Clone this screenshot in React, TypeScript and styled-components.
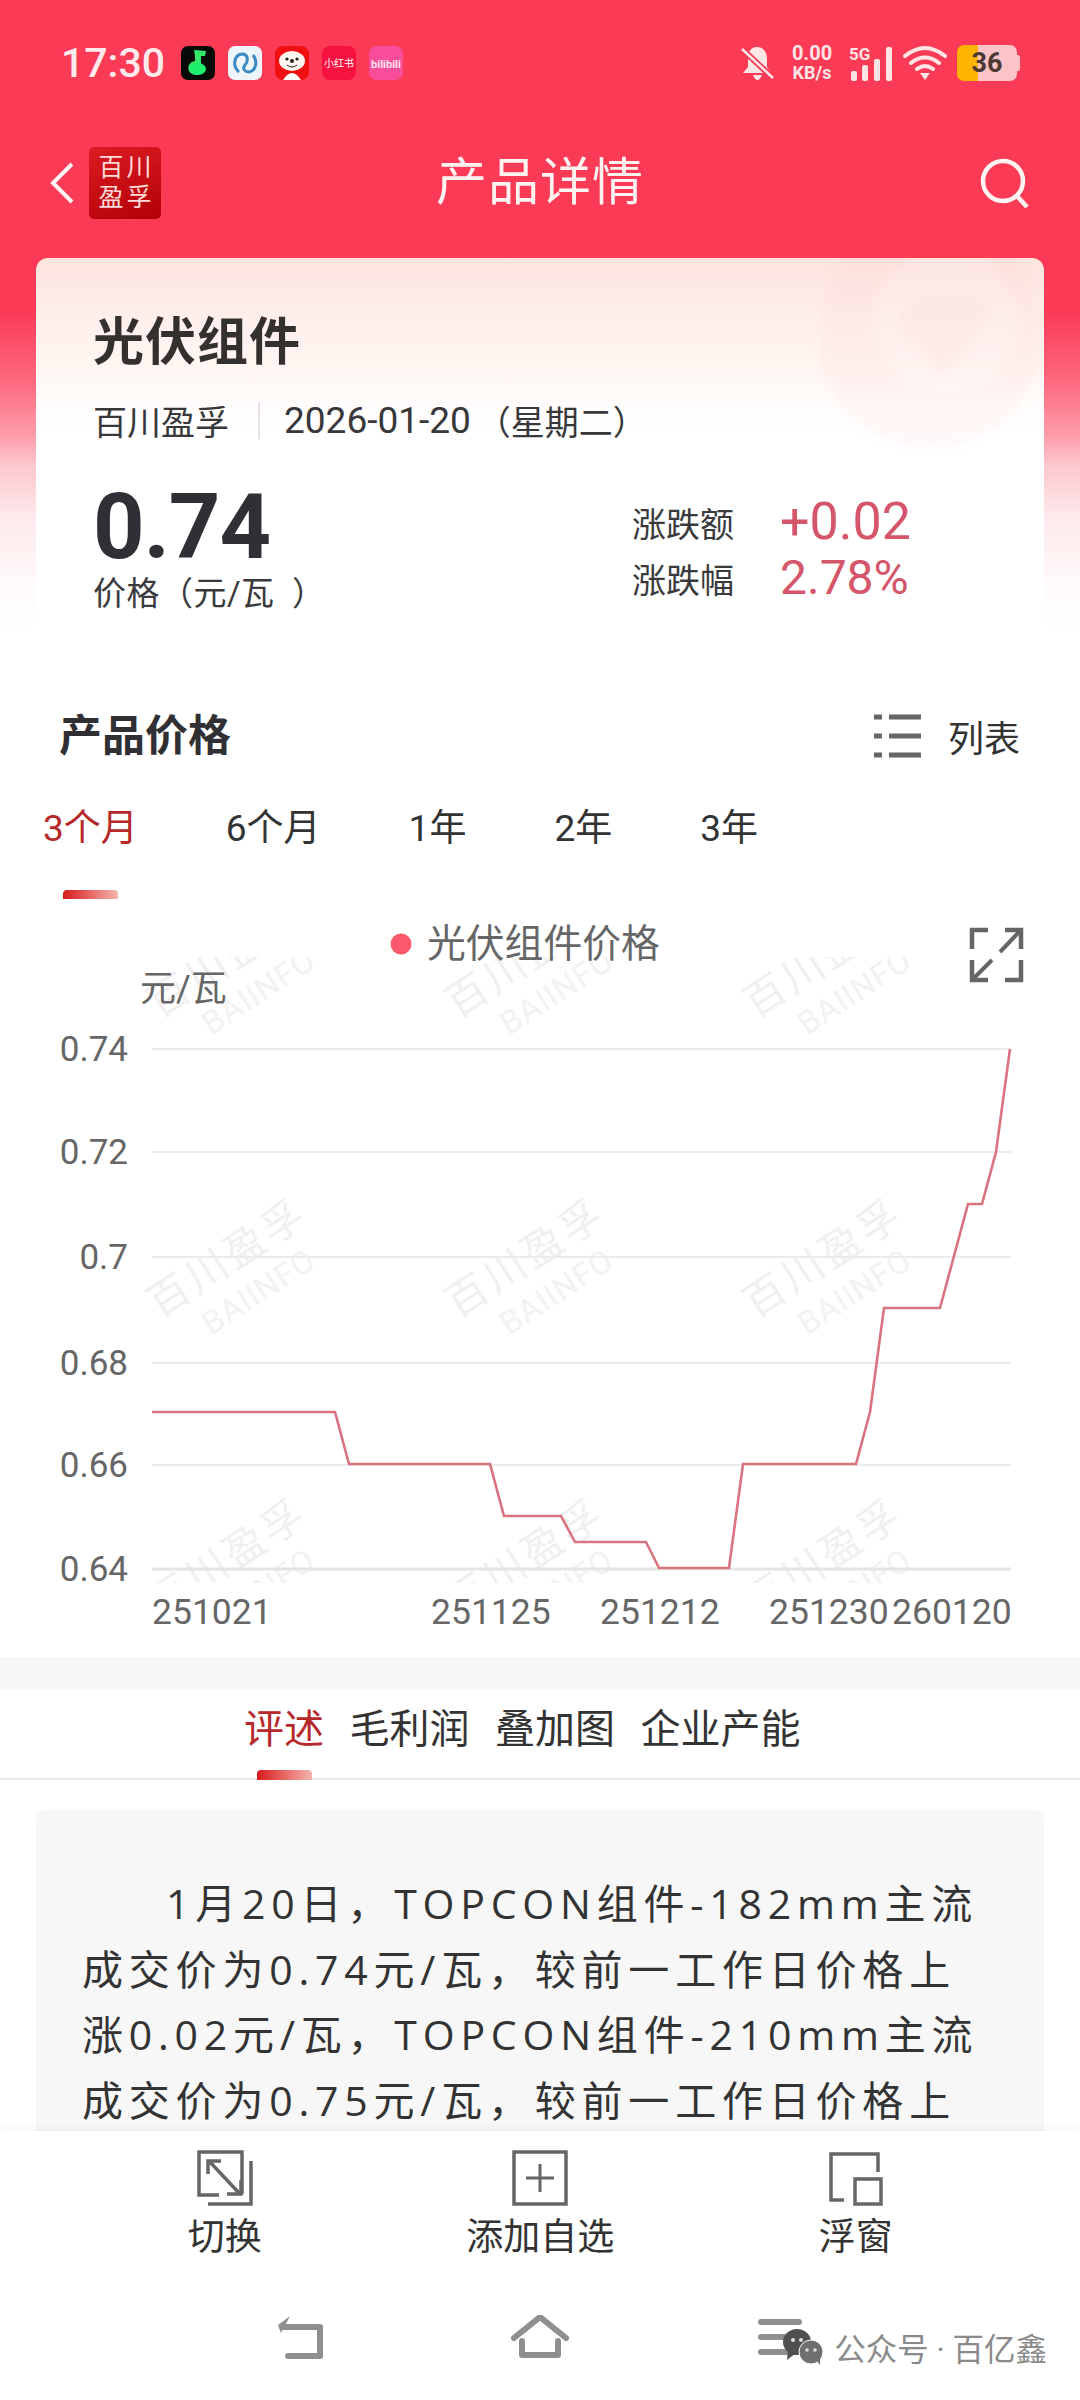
import React from "react";
import styled, { createGlobalStyle } from "styled-components";

const Global = createGlobalStyle`
  html, body { margin: 0; padding: 0; background: #fff; }
  * { box-sizing: border-box; }
  body { font-family: Roboto, "Noto Sans CJK SC", sans-serif; }
`;
const CJK = `Roboto, "Noto Sans CJK SC", sans-serif`;

const Page = styled.div`
  position: relative; width: 1080px; height: 2400px; overflow: hidden;
  display: flex; flex-direction: column; color: #2f2f33; font-family: ${CJK};
  background: linear-gradient(180deg, #fb3a56 0, #fb3a56 310px, #fd6a80 383px, #fe9aa8 433px, #fdc8cf 467px, #fee9ec 517px, #fffafa 583px, #fff 630px);
`;
const Scroll = styled.div`flex: 1; min-height: 0; overflow: hidden; display: flex; flex-direction: column;`;
const StatusBar = styled.div`
  height: 125px; flex: none; padding: 0 60px 0 61px; display: flex; align-items: center; justify-content: space-between;
`;
const StatusLeft = styled.div`display: flex; align-items: center;`;
const Time = styled.span`font-size: 41px; font-weight: 500; color: #ffe9ea; width: 120px; white-space: nowrap;`;
const AppIcons = styled.div`display: flex; gap: 13px;`;
const AppIcon = styled.svg`width: 34px; height: 34px; display: block;`;
const StatusRight = styled.div`display: flex; align-items: center;`;
const Speed = styled.div`
  width: 46px; margin: 0 14px 0 15px; color: #ffe4e5; font-weight: 700; text-align: center;
  display: flex; flex-direction: column; font-size: 20px; line-height: 20px;
`;
const SpeedUnit = styled.span`font-size: 18px; white-space: nowrap;`;
const Battery = styled.div`
  width: 60px; height: 36px; border-radius: 7px; overflow: hidden; display: flex; align-items: center; justify-content: center;
  margin-left: 10px; font-size: 27px; font-weight: 700; color: #4a3a33;
  background: linear-gradient(90deg, #ffb400 0, #ffb400 21px, #fdc4c8 21px);
`;
const BatteryCap = styled.div`width: 3px; height: 16px; background: #fdc4c8; border-radius: 0 2px 2px 0;`;
const NavBar = styled.div`
  height: 116px; flex: none; padding: 0 50px; display: grid; grid-template-columns: 1fr auto 1fr; align-items: center;
`;
const NavLeft = styled.div`display: flex; align-items: center; gap: 15px;`;
const NavRight = styled.div`display: flex; justify-content: flex-end;`;
const Logo = styled.div`
  width: 72px; height: 72px; border-radius: 5px; background: linear-gradient(160deg, #dc1c22, #b30008);
  display: flex; align-items: center; justify-content: center; text-align: center;
  color: #ffdcd8; font-size: 25px; line-height: 30px; letter-spacing: 3px; padding-left: 3px;
`;
const NavTitle = styled.h1`margin: 0; font-size: 51px; line-height: 60px; font-weight: 400; color: #fff3f2; letter-spacing: 1px;`;

const Card = styled.section`
  position: relative; flex: none; margin: 17px 36px 0; height: 392px; padding: 60px 57px 0; overflow: hidden;
  border-radius: 12px 12px 0 0;
  background: linear-gradient(180deg, #fde3de 0, #feefeb 60px, #fff6f2 110px, #fffdfc 150px, #fff 180px);
`;
const CardDeco = styled.svg`position: absolute; right: 0; top: 0; width: 224px; height: 200px; filter: blur(4px);`;
const CardTitle = styled.h2`position: relative; margin: 0; font-size: 51px; line-height: 50px; font-weight: 700; color: #33302f; letter-spacing: 1px;`;
const SubRow = styled.div`position: relative; margin-top: 32px; display: flex; align-items: center; height: 40px; font-size: 34px; color: #38383b; white-space: nowrap;`;
const SubDivider = styled.i`width: 2px; height: 37px; background: #e8e4e3; margin: 0 24px 0 29px;`;
const SubDate = styled.span`font-size: 37px;`;
const SubWeek = styled.span`margin-left: 6px;`;
const PriceRow = styled.div`display: grid; grid-template-columns: 539px auto; margin-top: 42px;`;
const PriceValue = styled.div`font-size: 90px; line-height: 92px; font-weight: 700; color: #2f2f35; letter-spacing: -1px;`;
const PriceLabel = styled.div`font-size: 33px; line-height: 40px; color: #3a3a3d; letter-spacing: .5px; white-space: pre;`;
const Stats = styled.div`margin-top: -4px; padding-top: 16px; display: grid; grid-template-columns: 148px auto; grid-auto-rows: 56px; align-items: center;`;
const StatLabel = styled.span`font-size: 34px; color: #3a3a3d;`;
const StatValue = styled.span<{ $size: number }>`font-size: ${p => p.$size}px; color: #d5566a; line-height: 56px; white-space: nowrap;`;

const SectionHead = styled.div`
  flex: none; background: #fff; padding: 64px 60px 0 59px; height: 108px; display: flex; align-items: center; justify-content: space-between;
`;
const SectionTitle = styled.h3`margin: 0; font-size: 43px; font-weight: 700; color: #302f33; line-height: 44px;`;
const ListBtn = styled.div`display: flex; align-items: center; gap: 27px; font-size: 36px; color: #333;`;
const RangeTabs = styled.div`flex: none; background: #fff; padding: 51px 0 0 43px; display: flex; gap: 88px;`;
const Tab = styled.div`display: flex; flex-direction: column; align-items: center; flex: none;`;
const TabText = styled.span<{ $active?: boolean }>`font-size: 37px; line-height: 40px; color: ${p => (p.$active ? "#b7282a" : "#333")}; white-space: nowrap;`;
const Indicator = styled.i<{ $top: number }>`
  display: block; width: 55px; height: 10px; margin-top: ${p => p.$top}px; border-radius: 4px 4px 0 0;
  background: linear-gradient(90deg, #d81a1c, #f5b5ae);
`;
const ChartSvg = styled.svg`flex: none; display: block; background: #fff; width: 1080px; height: 758px; margin-top: -1px;`;
const Band = styled.div`flex: none; height: 33px; background: #f7f7f7;`;
const DetailTabs = styled.div`
  flex: none; height: 90px; background: #fff; border-bottom: 2px solid #eeeae8; padding: 20px 0 0 244px; display: flex; gap: 25.5px; align-items: flex-start;
`;
const DetailTabText = styled(TabText)`font-size: 40px;`;
const TextWrap = styled.div`flex: 1; background: #fff; padding: 30px 36px 0; min-height: 0; overflow: hidden;`;
const TextCard = styled.div`
  height: 100%; border-radius: 10px 10px 0 0; background: #f7f7f8; padding: 61px 0 0 46px;
`;
const Para = styled.p`
  margin: 0; font-family: "Open Sans", "Noto Sans CJK SC", sans-serif; font-size: 41px; line-height: 65.5px; letter-spacing: 5.8px;
  color: #333; white-space: nowrap; text-indent: 84px;
`;
const ParaLine = styled.span`display: block; text-indent: 0;`;

const BottomBar = styled.div`flex: none; height: 269px; background: #fff; box-shadow: 0 -2px 8px rgba(0,0,0,.05); position: relative;`;
const Actions = styled.div`display: grid; grid-template-columns: repeat(3, 315.5px); padding: 19px 0 0 67px;`;
const Action = styled.div`display: flex; flex-direction: column; align-items: center; gap: 12px;`;
const ActionIcon = styled.svg`width: 56px; height: 56px; display: block;`;
const ActionLabel = styled.span`font-size: 37px; line-height: 40px; color: #333;`;
const SysNav = styled.div`display: grid; grid-template-columns: repeat(3, 240px); padding: 57px 180px 0; justify-items: center;`;
const SysIcon = styled.svg`width: 60px; height: 44px; display: block;`;
const Mark = styled.div`
  position: absolute; right: 33px; bottom: 30px; display: flex; align-items: center; gap: 10px; font-size: 31.5px; color: #8a8a8a; white-space: nowrap;
`;
const Wechat = styled.svg`width: 42px; height: 36px; display: block;`;

const gridYs: [string, number][] = [["0.74", 1049], ["0.72", 1152], ["0.7", 1257], ["0.68", 1363], ["0.66", 1465], ["0.64", 1569]];
const line = "152,1412 335,1412 349,1464 490,1464 504,1516 561,1516 575,1542 646,1542 659,1568 729,1568 743,1464 856,1464 870,1412 884,1308 940,1308 968,1204 982,1204 996,1152 1010,1049";
const dates: [string, number][] = [["251021", 152], ["251125", 431], ["251212", 600], ["251230", 769], ["260120", 892]];
const wmX = [0, 298, 596];
const wmY = [900, 1200, 1500];

function Chart() {
  return (
    <ChartSvg viewBox="0 899 1080 758">
      <defs><clipPath id="wm"><rect x="130" y="957" width="900" height="626" /></clipPath></defs>
      <g clipPath="url(#wm)" fontFamily={CJK}>
        {wmY.map(y => wmX.map(x => (
          <g key={`${x}-${y}`} transform={`translate(${x + 235} ${y + 70}) rotate(-33)`}>
            <text x="0" y="0" fontSize="41" textAnchor="middle" letterSpacing="4" fill="#f1efef">百川盈孚</text>
            <text x="8" y="42" fontSize="32" textAnchor="middle" letterSpacing="1" fill="#f3f1f1">BAIINFO</text>
          </g>
        )))}
      </g>
      <circle cx="401" cy="944" r="10.5" fill="#f9596a" />
      <text x="427" y="957" fontSize="38.8" fill="#666" fontFamily={CJK}>光伏组件价格</text>
      <text x="140" y="1001" fontSize="36" fill="#666" fontFamily={CJK}>元/瓦</text>
      <path d="M972 949 V930 H988 M1005 930 H1021 V949 M972 960 V980 H988 M1005 980 H1021 V960" fill="none" stroke="#666" strokeWidth="4.5" />
      <path d="M1000 952 L1019 932 M972 980 L992 960" stroke="#666" strokeWidth="4" fill="none" />
      {gridYs.map(([l, y]) => (
        <g key={l}>
          <line x1="152" x2="1011" y1={y} y2={y} stroke={l === "0.64" ? "#e4e4e4" : "#ebebeb"} strokeWidth={l === "0.64" ? 3 : 2} />
          <text x="128" y={y + 12} fontSize="35" textAnchor="end" fill="#666" fontFamily={CJK}>{l}</text>
        </g>
      ))}
      <polyline points={line} fill="none" stroke="#d9737f" strokeWidth="2.6" />
      {dates.map(([d, x]) => (
        <text key={d} x={x} y="1624" fontSize="35.5" fill="#666" fontFamily={CJK}>{d}</text>
      ))}
    </ChartSvg>
  );
}

export default function App() {
  return (
    <Page>
      <Global />
      <Scroll>
        <StatusBar>
          <StatusLeft>
            <Time>17:30</Time>
            <AppIcons>
              <AppIcon viewBox="0 0 34 34">
                <rect width="34" height="34" rx="7" fill="#070b08" />
                <path d="M13 4 L25 5 L24 10 L20 10 L20 17 A7.5 7 0 1 1 14 15 L14 10 Z" fill="#35e86a" />
                <ellipse cx="17" cy="23" rx="8" ry="6" fill="#1df06c" />
              </AppIcon>
              <AppIcon viewBox="0 0 34 34">
                <rect width="34" height="34" rx="7" fill="#eef5fa" />
                <path d="M11 26 C4 20 6 9 14 8 C21 8 20 16 17 19 C14 23 17 26 21 26 C28 25 30 15 25 9" fill="none" stroke="#3c8ac4" strokeWidth="3" />
              </AppIcon>
              <AppIcon viewBox="0 0 34 34">
                <rect width="34" height="34" rx="8" fill="#f01010" />
                <ellipse cx="17" cy="15" rx="13" ry="10" fill="#fff6ef" />
                <path d="M8 34 Q17 20 26 34 Z" fill="#fff" />
                <circle cx="12" cy="13" r="1.6" fill="#222" /><circle cx="22" cy="13" r="1.6" fill="#222" /><circle cx="17" cy="15" r="2" fill="#222" />
                <path d="M12 19 Q17 23 22 19" stroke="#222" strokeWidth="1" fill="none" />
              </AppIcon>
              <AppIcon viewBox="0 0 34 34">
                <rect width="34" height="34" rx="8" fill="#f7123f" />
                <text x="17" y="21" fontSize="10" fill="#fff" textAnchor="middle" fontFamily={CJK}>小红书</text>
              </AppIcon>
              <AppIcon viewBox="0 0 34 34">
                <rect width="34" height="34" rx="8" fill="#f84d9a" />
                <text x="17" y="22" fontSize="11" fill="#ffe3ef" textAnchor="middle" fontWeight="700" fontFamily={CJK}>bilibili</text>
              </AppIcon>
            </AppIcons>
          </StatusLeft>
          <StatusRight>
            <svg width="33" height="36" viewBox="0 0 33 36">
              <path d="M16 2 C9 2 7 8 7 14 V22 L2 28 H30 L26 22 V14 C26 8 23 2 16 2 Z M12 30 H21 Q19 35 16.5 35 Q14 35 12 30 Z" fill="#ffe6e6" />
              <path d="M1 4 L32 33" stroke="#fb3a56" strokeWidth="6" />
              <path d="M1 4 L32 33" stroke="#ffe6e6" strokeWidth="2.5" />
            </svg>
            <Speed>0.00<SpeedUnit>KB/s</SpeedUnit></Speed>
            <svg width="44" height="36" viewBox="0 0 44 36">
              <text x="0" y="15" fontSize="17" fontWeight="700" fill="#ffe4e5" fontFamily={CJK}>5G</text>
              <rect x="2" y="26" width="6" height="10" rx="2" fill="#ffe4e5" />
              <rect x="13" y="20" width="6" height="16" rx="2" fill="#ffe4e5" />
              <rect x="25" y="14" width="6" height="22" rx="2" fill="#ffe4e5" />
              <rect x="37" y="2" width="6" height="34" rx="2" fill="#ffe4e5" />
            </svg>
            <svg width="44" height="36" viewBox="0 0 44 36" style={{ marginLeft: 10 }}>
              <path d="M2 11 Q22 -5 42 11 M8 18 Q22 7 36 18 M14 24 Q22 18 30 24" fill="none" stroke="#ffe4e5" strokeWidth="4" strokeLinecap="round" />
              <path d="M17 28 H27 L22 35 Z" fill="#ffe4e5" />
            </svg>
            <Battery>36</Battery>
            <BatteryCap />
          </StatusRight>
        </StatusBar>
        <NavBar>
          <NavLeft>
            <svg width="24" height="42" viewBox="0 0 24 42"><path d="M22 2 L3 21 L22 40" fill="none" stroke="#fff3f2" strokeWidth="4" /></svg>
            <Logo>百川<br />盈孚</Logo>
          </NavLeft>
          <NavTitle>产品详情</NavTitle>
          <NavRight>
            <svg width="50" height="50" viewBox="0 0 50 50">
              <circle cx="23" cy="23" r="20" fill="none" stroke="#fff3f2" strokeWidth="4.5" />
              <path d="M37 38 L47 49" stroke="#fff3f2" strokeWidth="4.5" />
            </svg>
          </NavRight>
        </NavBar>
        <Card>
          <CardDeco viewBox="820 258 224 200">
            <circle cx="930" cy="335" r="113" fill="#fbc8c8" opacity=".12" />
            <circle cx="946" cy="322" r="72" fill="#fff" opacity=".22" />
            <path d="M897 322 L943 373 L993 310 L975 296 L915 298 Z" fill="#fcd4ce" opacity=".22" />
          </CardDeco>
          <CardTitle>光伏组件</CardTitle>
          <SubRow>百川盈孚<SubDivider /><SubDate>2026-01-20</SubDate><SubWeek>（星期二）</SubWeek></SubRow>
          <PriceRow>
            <div>
              <PriceValue>0.74</PriceValue>
              <PriceLabel>价格（元/瓦  ）</PriceLabel>
            </div>
            <Stats>
              <StatLabel>涨跌额</StatLabel><StatValue $size={52}>+0.02</StatValue>
              <StatLabel>涨跌幅</StatLabel><StatValue $size={48}>2.78%</StatValue>
            </Stats>
          </PriceRow>
        </Card>
        <SectionHead>
          <SectionTitle>产品价格</SectionTitle>
          <ListBtn>
            <svg width="47" height="44" viewBox="0 0 47 44">
              <path d="M0 3 H8 M15 3 H47 M0 22 H8 M15 22 H47 M0 41 H8 M15 41 H47" stroke="#666" strokeWidth="5" />
            </svg>
            列表
          </ListBtn>
        </SectionHead>
        <RangeTabs>
          <Tab><TabText $active>3个月</TabText><Indicator $top={41} /></Tab>
          <Tab><TabText>6个月</TabText></Tab>
          <Tab><TabText>1年</TabText></Tab>
          <Tab><TabText>2年</TabText></Tab>
          <Tab><TabText>3年</TabText></Tab>
        </RangeTabs>
        <Chart />
        <Band />
        <DetailTabs>
          <Tab><DetailTabText $active>评述</DetailTabText><Indicator $top={20} /></Tab>
          <Tab><DetailTabText>毛利润</DetailTabText></Tab>
          <Tab><DetailTabText>叠加图</DetailTabText></Tab>
          <Tab><DetailTabText>企业产能</DetailTabText></Tab>
        </DetailTabs>
        <TextWrap>
          <TextCard>
            <Para>
              1月20日，TOPCON组件-182mm主流
              <ParaLine>成交价为0.74元/瓦，较前一工作日价格上</ParaLine>
              <ParaLine>涨0.02元/瓦，TOPCON组件-210mm主流</ParaLine>
              <ParaLine>成交价为0.75元/瓦，较前一工作日价格上</ParaLine>
            </Para>
          </TextCard>
        </TextWrap>
      </Scroll>
      <BottomBar>
        <Actions>
          <Action>
            <ActionIcon viewBox="0 0 56 56">
              <path d="M22 45 H2 V2 H45 V44" fill="none" stroke="#666" strokeWidth="3.5" />
              <path d="M54 11 V54 H11" fill="none" stroke="#666" strokeWidth="3.5" />
              <path d="M12 11 L43 44 M11 24 V11 H24 M44 30 V44 H30" fill="none" stroke="#666" strokeWidth="3.5" />
            </ActionIcon>
            <ActionLabel>切换</ActionLabel>
          </Action>
          <Action>
            <ActionIcon viewBox="0 0 56 56">
              <rect x="2" y="2" width="52" height="52" fill="none" stroke="#666" strokeWidth="3.5" />
              <path d="M14 28 H42 M28 14 V42" stroke="#666" strokeWidth="3" />
            </ActionIcon>
            <ActionLabel>添加自选</ActionLabel>
          </Action>
          <Action>
            <ActionIcon viewBox="0 0 56 56">
              <path d="M16 50 H3 V4 H50 V22" fill="none" stroke="#666" strokeWidth="3.5" />
              <rect x="27" y="29" width="26" height="25" fill="none" stroke="#666" strokeWidth="3.5" />
            </ActionIcon>
            <ActionLabel>浮窗</ActionLabel>
          </Action>
        </Actions>
        <SysNav>
          <SysIcon viewBox="0 0 60 44">
            <path d="M18 41 H50 V12 H12" fill="none" stroke="#8f8f8f" strokeWidth="6" strokeLinejoin="round" strokeLinecap="round" />
            <path d="M20 1 L8 10 L11 18 Z" fill="#8f8f8f" />
          </SysIcon>
          <SysIcon viewBox="0 0 60 44">
            <path d="M4 23 L30 2 L56 23" fill="none" stroke="#8f8f8f" strokeWidth="6" strokeLinecap="round" strokeLinejoin="round" />
            <path d="M12 26 V40 H48 V26" fill="none" stroke="#8f8f8f" strokeWidth="6" strokeLinecap="round" strokeLinejoin="round" />
          </SysIcon>
          <SysIcon viewBox="0 0 60 44">
            <path d="M11 7 H49 M11 22 H49 M11 37 H49" stroke="#8f8f8f" strokeWidth="6" strokeLinecap="round" />
          </SysIcon>
        </SysNav>
        <Mark>
          <Wechat viewBox="0 0 42 36">
            <ellipse cx="15" cy="13" rx="14" ry="13" fill="#4f4f4f" />
            <path d="M6 22 L5 31 L14 24 Z" fill="#4f4f4f" />
            <ellipse cx="29" cy="23" rx="12" ry="12" fill="#6f6f6f" stroke="#fff" strokeWidth="1" />
            <path d="M35 32 L38 36 L38 28 Z" fill="#6f6f6f" />
            <circle cx="11" cy="11" r="2" fill="#ddd" /><circle cx="19" cy="11" r="2" fill="#ddd" />
            <circle cx="25" cy="21" r="1.8" fill="#ddd" /><circle cx="33" cy="21" r="1.8" fill="#ddd" />
          </Wechat>
          公众号 · 百亿鑫
        </Mark>
      </BottomBar>
    </Page>
  );
}
